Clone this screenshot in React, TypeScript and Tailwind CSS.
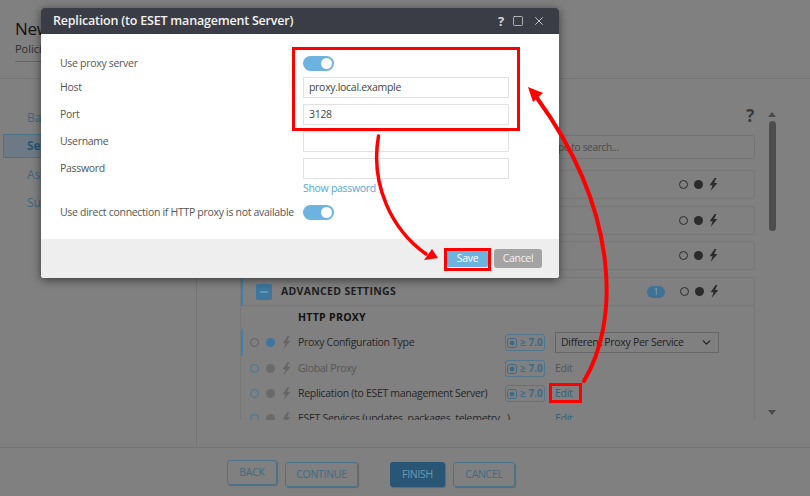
import { ChevronDown, Minus, Square, X } from "lucide-react";

const font = "font-['Open_Sans','Noto_Sans',sans-serif]";

function Bolt({ className }: { className: string }) {
  return (
    <svg viewBox="0 0 9 13" className={`h-[13px] w-[9px] ${className}`} fill="currentColor">
      <path d="M5.6 0 L0.6 7.2 H3.6 L1.6 13 L8.4 5 H5.1 L7.4 0 Z" />
    </svg>
  );
}

function StateIcons() {
  return (
    <div className="flex items-center gap-[6px]">
      <span className="h-[9px] w-[9px] rounded-full border-[1.5px] border-[#2b2b2b]" />
      <span className="h-[9px] w-[9px] rounded-full bg-[#2b2b2b]" />
      <Bolt className="text-[#2b2b2b]" />
    </div>
  );
}

function Card() {
  return (
    <div className="flex h-[29px] items-center justify-end rounded-[3px] border border-[#777777] pr-[36px]">
      <StateIcons />
    </div>
  );
}

function VersionBadge() {
  return (
    <div className="flex h-[17px] w-[40px] items-center justify-center gap-[3px] rounded-[3px] border border-[#52768d] text-[10px] font-bold tracking-normal text-[#3c6a88]">
      <svg viewBox="0 0 10 10" className="h-[10px] w-[10px]" fill="none" stroke="#3c6a88">
        <rect x="0.5" y="0.5" width="9" height="9" rx="2" />
        <circle cx="5" cy="5" r="2" fill="#3c6a88" />
      </svg>
      <span>≥ 7.0</span>
    </div>
  );
}

type RowProps = {
  label: string;
  active?: boolean;
  muted?: boolean;
  marked?: boolean;
  editMuted?: boolean;
  select?: boolean;
  noBadge?: boolean;
};

function PolicyRow({ label, active, muted, marked, editMuted, select, noBadge }: RowProps) {
  return (
    <div
      className={`flex shrink-0 items-center ${marked ? "h-[27px] border-l-2 border-[#3f7fa8]" : "h-[25px] border-l-2 border-transparent"}`}
    >
      <span
        className={`ml-[7px] h-[9px] w-[9px] rounded-full border-[1.5px] ${active ? "border-[#5f5f5f]" : "border-[#3b779e]"}`}
      />
      <span
        className={`ml-[7px] h-[9px] w-[9px] rounded-full ${active ? "bg-[#3b779e]" : "bg-[#6a6a6a]"}`}
      />
      <Bolt className="ml-[7px] text-[#666666]" />
      <span
        className={`ml-[7px] w-[207px] whitespace-nowrap text-[10.5px] ${muted ? "text-[#555555]" : "text-[#262626]"}`}
      >
        {label}
      </span>
      {noBadge ? <div className="w-[40px]" /> : <VersionBadge />}
      {select ? (
        <div className="ml-[10px] flex h-[21px] w-[164px] items-center justify-between border border-[#666666] px-[5px] text-[10.5px] text-[#222222]">
          <span>Different Proxy Per Service</span>
          <ChevronDown size={13} strokeWidth={2.5} className="text-[#222222]" />
        </div>
      ) : (
        <span
          className={`ml-[10px] text-[10.5px] ${editMuted ? "text-[#555555]" : "text-[#2f607f]"}`}
        >
          Edit
        </span>
      )}
    </div>
  );
}

function Toggle() {
  return (
    <div className="flex h-[15px] w-[31px] items-center justify-end rounded-full bg-[#6db3e0] pr-[2px]">
      <span className="h-[11px] w-[11px] rounded-full bg-white" />
    </div>
  );
}

function Field({ label, value }: { label: string; value?: string }) {
  return (
    <div className="flex h-[21px] items-center">
      <span className="w-[243px] text-[10.5px] text-[#555555]">{label}</span>
      <div className="flex h-[21px] w-[206px] items-center border border-[#e2e2e2] px-[5px] text-[10.5px] text-[#444444]">
        {value}
      </div>
    </div>
  );
}

function FooterButton({ label, width, solid }: { label: string; width: string; solid?: boolean }) {
  return (
    <button
      type="button"
      className={`h-[25px] rounded-[3px] text-[10.5px] shadow-[1px_1px_1px_#666666] ${width} ${
        solid
          ? "bg-[#285674] text-[#6f98b5]"
          : "border border-[#4c7289] text-[#3f6a85]"
      }`}
    >
      {label}
    </button>
  );
}

export default function App() {
  return (
    <div className={`relative h-[496px] w-[810px] overflow-hidden bg-[#808080] tracking-[-0.3px] ${font}`}>
      <div className="flex h-full flex-col">
        <header className="h-[79px] shrink-0 border-b border-[#757575] pl-[15px] pt-[18px]">
          <div className="text-[17px] leading-[21px] text-[#111111]">New Policy</div>
          <div className="mt-[2px] text-[11px] tracking-normal text-[#2e2e2e]">Policies</div>
          <div className="mt-[3px] h-px w-[120px] bg-[#666666]" />
        </header>

        <div className="flex min-h-0 flex-1">
          <aside className="w-[197px] shrink-0 border-r border-[#757575] pl-[3px] pt-[27px] text-[12px] tracking-normal text-[#3d6780]">
            <div className="flex h-[23px] items-center pl-[24px]">Basic</div>
            <div className="mt-[5px] flex h-[24px] items-center border border-[#4c7289] bg-[#6d7a85] pl-[23px] font-bold text-[#2a5673]">
              Settings
            </div>
            <div className="mt-[5px] flex h-[23px] items-center pl-[24px]">Assign</div>
            <div className="mt-[5px] flex h-[23px] items-center pl-[24px]">Summary</div>
          </aside>

          <main className="flex min-w-0 flex-1">
            <div className="ml-[43px] flex h-[341px] w-[515px] flex-col overflow-hidden">
              <div className="flex h-[56px] shrink-0 items-end justify-end pb-[9px] pr-[1px]">
                <span className="text-[17px] font-bold leading-[20px] text-[#3a3a3a]">?</span>
              </div>
              <div className="flex h-[24px] shrink-0 items-center rounded-[3px] border border-[#737373] pl-[307px] text-[10px] text-[#4a4a4a]">
                Type to search...
              </div>
              <div className="mt-[11px] flex shrink-0 flex-col gap-[6.5px]">
                <Card />
                <Card />
                <Card />
              </div>
              <div className="mt-[7px] flex shrink-0 flex-col rounded-[3px] border border-[#777777]">
                <div className="flex h-[28px] shrink-0 items-center border-b border-l-2 border-b-[#777777] border-l-[#3f7fa8] pl-[13px] pr-[35px]">
                  <span className="flex h-[16px] w-[16px] items-center justify-center rounded-[2px] bg-[#3b779e]">
                    <Minus size={12} className="text-[#8fb3cb]" />
                  </span>
                  <span className="ml-[9px] flex-1 text-[10.5px] font-bold tracking-[0.3px] text-[#1d1d1d]">
                    ADVANCED SETTINGS
                  </span>
                  <span className="mr-[15px] flex h-[12px] w-[18px] items-center justify-center rounded-full bg-[#3f7296] text-[9px] text-[#83a6bd]">
                    1
                  </span>
                  <StateIcons />
                </div>
                <div className="flex h-[23px] shrink-0 items-center pl-[57px] text-[10.5px] font-bold tracking-[0.3px] text-[#111111]">
                  HTTP PROXY
                </div>
                <PolicyRow label="Proxy Configuration Type" active marked select />
                <PolicyRow label="Global Proxy" muted editMuted />
                <PolicyRow label="Replication (to ESET management Server)" />
                <PolicyRow label="ESET Services (updates, packages, telemetry...)" noBadge />
              </div>
            </div>
            <div className="ml-[13px] flex h-[341px] w-[8px] flex-col items-center pt-[33px]">
              <span className="border-x-[4px] border-b-[5px] border-x-transparent border-b-[#4a4a4a]" />
              <span className="mt-[4px] h-[110px] w-[7px] rounded-full bg-[#4d4d4d]" />
              <span className="mt-auto mb-[5px] border-x-[4px] border-t-[5px] border-x-transparent border-t-[#4a4a4a]" />
            </div>
          </main>
        </div>

        <footer className="flex h-[49px] shrink-0 items-start border-t border-[#757575] pl-[227px] pt-[12px]">
          <FooterButton label="BACK" width="w-[50px]" />
          <div className="ml-[8px]">
            <FooterButton label="CONTINUE" width="w-[73px]" />
          </div>
          <div className="ml-[32px]">
            <FooterButton label="FINISH" width="w-[55px]" solid />
          </div>
          <div className="ml-[8px]">
            <FooterButton label="CANCEL" width="w-[62px]" />
          </div>
        </footer>
      </div>

      {/* modal dialog */}
      <div className="absolute left-[41px] top-[8px] flex h-[270px] w-[518px] flex-col overflow-hidden rounded-[3px] bg-white shadow-[0_2px_10px_rgba(0,0,0,0.55)]">
        <div className="flex h-[26px] shrink-0 items-center justify-between bg-[#3a3d45] pl-[12px] pr-[13px]">
          <span className="text-[12.5px] font-semibold tracking-[-0.2px] text-[#f2f2f2]">
            Replication (to ESET management Server)
          </span>
          <div className="flex items-center gap-[8px] text-[#d5d5d5]">
            <span className="text-[13px] font-bold leading-none">?</span>
            <Square size={12} strokeWidth={1.5} />
            <X size={14} strokeWidth={1.5} />
          </div>
        </div>
        <div className="flex flex-1 flex-col pl-[19px] pt-[22px]">
          <div className="flex h-[15px] items-center">
            <span className="w-[243px] text-[10.5px] text-[#555555]">Use proxy server</span>
            <Toggle />
          </div>
          <div className="mt-[6px] flex flex-col gap-[6px]">
            <Field label="Host" value="proxy.local.example" />
            <Field label="Port" value="3128" />
            <Field label="Username" />
            <Field label="Password" />
          </div>
          <div className="ml-[243px] mt-[2px] text-[10.5px] leading-[15px] text-[#55a7dc]">Show password</div>
          <div className="mt-[9px] flex h-[15px] items-center">
            <span className="w-[243px] whitespace-nowrap text-[10.5px] text-[#555555]">
              Use direct connection if HTTP proxy is not available
            </span>
            <Toggle />
          </div>
        </div>
        <div className="flex h-[39px] shrink-0 items-center justify-end gap-[6px] bg-[#eeeeee] pr-[17px]">
          <button type="button" className="h-[16px] w-[41px] rounded-[2px] bg-[#6db3e0] text-[10.5px] text-white">
            Save
          </button>
          <button type="button" className="h-[19px] w-[48px] rounded-[3px] bg-[#a3a3a3] text-[10.5px] text-[#f2f2f2]">
            Cancel
          </button>
        </div>
      </div>

      {/* red annotations over the screenshot */}
      <svg className="pointer-events-none absolute inset-0 h-[496px] w-[810px]" viewBox="0 0 810 496" fill="none">
        <rect x="293.5" y="48.5" width="225" height="81" stroke="#ff0000" strokeWidth="3" />
        <rect x="445.5" y="249.5" width="44" height="20" stroke="#ff0000" strokeWidth="3" />
        <rect x="550.5" y="384.5" width="30" height="17" stroke="#ff0000" strokeWidth="3" />
        <path d="M378.5 136 C 370 185, 392 230, 426 254" stroke="#ff0000" strokeWidth="3.5" strokeLinecap="round" />
        <path d="M438 258 L424 260 L432 249 Z" fill="#ff0000" />
        <path d="M584 381 C 618 325, 622 215, 537 98" stroke="#ff0000" strokeWidth="4" strokeLinecap="round" />
        <path d="M528 87 L543 93 L533 102 Z" fill="#ff0000" />
      </svg>
    </div>
  );
}
